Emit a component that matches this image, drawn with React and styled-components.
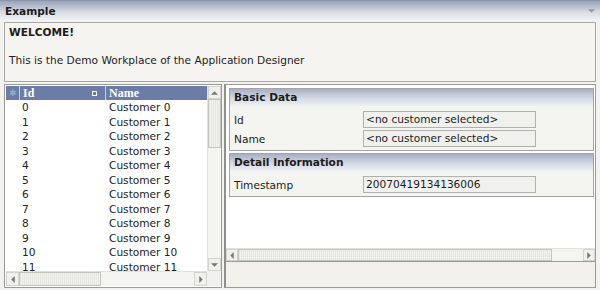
import React from "react";
import styled, { createGlobalStyle } from "styled-components";

const GlobalStyle = createGlobalStyle`
  html, body {
    margin: 0;
    padding: 0;
    background: #f3f2ee;
  }
  body {
    font-family: "DejaVu Sans", Verdana, sans-serif;
    font-size: 10.6px;
    color: #1c1c1c;
  }
`;

const Page = styled.div`
  width: 600px;
  height: 290px;
  display: flex;
  flex-direction: column;
  overflow: hidden;
  background: #f3f2ee;
`;

const TitleBar = styled.div`
  height: 20px;
  flex: none;
  display: flex;
  align-items: center;
  justify-content: space-between;
  padding: 0 5px 0 5px;
  background: linear-gradient(#9aa3b8, #d9dde6 60%, #eef0f3);
  border-top: 1px solid #8c95ab;
  box-sizing: border-box;
  font-weight: bold;
`;

const Body = styled.div`
  display: flex;
  flex-direction: column;
  padding: 2px 4px 0 4px;
  gap: 2px;
`;

const Welcome = styled.div`
  height: 60px;
  flex: none;
  box-sizing: border-box;
  border: 1px solid #a8a8a8;
  background: #f6f4f0;
  padding: 3px 4px;
  line-height: 13px;
`;

const WelcomeTitle = styled.div`
  font-weight: bold;
  margin-bottom: 15px;
`;

const Split = styled.div`
  height: 204px;
  flex: none;
  display: flex;
  gap: 2px;
`;

const LeftPanel = styled.div`
  width: 218px;
  flex: none;
  box-sizing: border-box;
  border: 1px solid #9a9a9a;
  background: #fff;
  padding: 1px 0 1px 1px;
  display: grid;
  grid-template-columns: minmax(0, 1fr) 14px;
  grid-template-rows: minmax(0, 1fr) 15px;
  overflow: hidden;
`;

const TableArea = styled.div`
  overflow: hidden;
  min-height: 0;
`;

const HeaderRow = styled.div`
  display: grid;
  grid-template-columns: 13px 86px 1fr;
  height: 14px;
  background: #6b7da6;
  color: #fff;
  font-family: "Liberation Serif", "Times New Roman", serif;
  font-weight: bold;
  font-size: 12px;
  line-height: 14px;
`;

const HeaderCell = styled.div`
  position: relative;
  padding-left: ${(p) => p.$pad || 3}px;
  border-left: ${(p) => (p.$first ? "none" : "1px solid #c8d0e0")};
  color: ${(p) => (p.$dim ? "#9aa8c6" : "#fff")};
  font-family: ${(p) => (p.$dim ? '"DejaVu Sans", sans-serif' : "inherit")};
  font-size: ${(p) => (p.$dim ? "9px" : "inherit")};
`;

const SortBox = styled.span`
  position: absolute;
  right: 8px;
  top: 5px;
  width: 3px;
  height: 3px;
  border: 1px solid #fff;
`;

const Row = styled.div`
  display: grid;
  grid-template-columns: 13px 86px 1fr;
  height: 14.5px;
  line-height: 14.5px;
  color: #222;
`;

const Cell = styled.div`
  padding-left: ${(p) => p.$pad || 3}px;
  white-space: nowrap;
`;

const VScroll = styled.div`
  display: flex;
  flex-direction: column;
  background: #f4f4f0;
  border-left: 1px solid #e2e2dc;
  min-height: 0;
`;

const HScroll = styled.div`
  flex: none;
  display: flex;
  background: #f4f4f0;
  border-top: 1px solid #e2e2dc;
  height: ${(p) => p.$h || 15}px;
  box-sizing: border-box;
`;

const ArrowBox = styled.div`
  flex: none;
  width: ${(p) => p.$w || 13}px;
  height: ${(p) => p.$h || 13}px;
  display: flex;
  align-items: center;
  justify-content: center;
  background: #f0f0ec;
  border: 1px solid #d4d4ce;
  box-sizing: border-box;
`;

const Thumb = styled.div`
  flex: none;
  background: repeating-linear-gradient(90deg, #e6e6e0 0 1px, #f2f2ee 1px 2px);
  border: 1px solid #c4c4be;
  box-sizing: border-box;
  ${(p) => (p.$vertical ? `height: ${p.$size}px;` : `width: ${p.$size}px;`)}
`;

const Track = styled.div`
  flex: 1;
`;

const Corner = styled.div`
  background: #f0f0ec;
`;

const RightPanel = styled.div`
  flex: 1;
  box-sizing: border-box;
  border: 1px solid #9a9a9a;
  border-left: 2px solid #8f8f8f;
  display: flex;
  flex-direction: column;
  background: #fff;
  overflow: hidden;
`;

const RightContent = styled.div`
  flex: 1;
  min-height: 0;
  padding: 3px 1px 0 3px;
  display: flex;
  flex-direction: column;
  gap: 2px;
`;

const Section = styled.div`
  border: 1px solid #a4a4a4;
  background: #f4f4f1;
  padding-bottom: 2px;
`;

const SectionHeader = styled.div`
  height: 17px;
  line-height: 17px;
  padding-left: 4px;
  font-weight: bold;
  background: linear-gradient(#a7afc3, #d3d8e3 55%, #eef0f4);
`;

const FieldRow = styled.div`
  display: flex;
  align-items: center;
  height: 19px;
  padding-left: 4px;
  margin-top: ${(p) => p.$top || 0}px;
`;

const Label = styled.div`
  width: 129px;
  flex: none;
`;

const Field = styled.div`
  width: 173px;
  height: 17px;
  box-sizing: border-box;
  border: 1px solid #b0b0b0;
  background: #f0f0ec;
  line-height: 15px;
  padding-left: 2px;
  white-space: nowrap;
  overflow: hidden;
`;

const Footer = styled.div`
  height: 26px;
  flex: none;
  border-top: 1px solid #9a9a9a;
  box-sizing: border-box;
  background: #f2f1ec;
`;

const Tri = ({ dir, color = "#777" }) => {
  const pts = {
    up: "0,5 5,0 10,5",
    down: "0,0 10,0 5,5",
    left: "5,0 5,10 0,5",
    right: "0,0 0,10 5,5",
  }[dir];
  const vertical = dir === "up" || dir === "down";
  return (
    <svg width={vertical ? 7 : 4} height={vertical ? 4 : 7} viewBox={vertical ? "0 0 10 5" : "0 0 5 10"}>
      <polygon points={pts} fill={color} />
    </svg>
  );
};

const customers = Array.from({ length: 12 }, (_, i) => i);

export default function App() {
  return (
    <Page>
      <GlobalStyle />
      <TitleBar>
        <span>Example</span>
        <Tri dir="down" color="#8e98ae" />
      </TitleBar>
      <Body>
        <Welcome>
          <WelcomeTitle>WELCOME!</WelcomeTitle>
          <div>This is the Demo Workplace of the Application Designer</div>
        </Welcome>
        <Split>
          <LeftPanel>
            <TableArea>
              <HeaderRow>
                <HeaderCell $first $dim $pad={3}>✱</HeaderCell>
                <HeaderCell>
                  Id
                  <SortBox />
                </HeaderCell>
                <HeaderCell>Name</HeaderCell>
              </HeaderRow>
              {customers.map((i) => (
                <Row key={i}>
                  <Cell />
                  <Cell $pad={3}>{i}</Cell>
                  <Cell $pad={4}>Customer {i}</Cell>
                </Row>
              ))}
            </TableArea>
            <VScroll>
              <ArrowBox>
                <Tri dir="up" />
              </ArrowBox>
              <Thumb $vertical $size={49} />
              <Track />
              <ArrowBox>
                <Tri dir="down" />
              </ArrowBox>
            </VScroll>
            <HScroll>
              <ArrowBox $w={13} $h={14}>
                <Tri dir="left" />
              </ArrowBox>
              <Thumb $size={82} />
              <Track />
              <ArrowBox $w={13} $h={14}>
                <Tri dir="right" />
              </ArrowBox>
            </HScroll>
            <Corner />
          </LeftPanel>
          <RightPanel>
            <RightContent>
              <Section>
                <SectionHeader>Basic Data</SectionHeader>
                <FieldRow $top={4}>
                  <Label>Id</Label>
                  <Field>&lt;no customer selected&gt;</Field>
                </FieldRow>
                <FieldRow>
                  <Label>Name</Label>
                  <Field>&lt;no customer selected&gt;</Field>
                </FieldRow>
              </Section>
              <Section>
                <SectionHeader>Detail Information</SectionHeader>
                <FieldRow $top={4}>
                  <Label>Timestamp</Label>
                  <Field>20070419134136006</Field>
                </FieldRow>
              </Section>
            </RightContent>
            <HScroll $h={13}>
              <ArrowBox $w={12} $h={12}>
                <Tri dir="left" />
              </ArrowBox>
              <Thumb $size={314} />
              <Track />
              <ArrowBox $w={12} $h={12}>
                <Tri dir="right" />
              </ArrowBox>
            </HScroll>
            <Footer />
          </RightPanel>
        </Split>
      </Body>
    </Page>
  );
}
